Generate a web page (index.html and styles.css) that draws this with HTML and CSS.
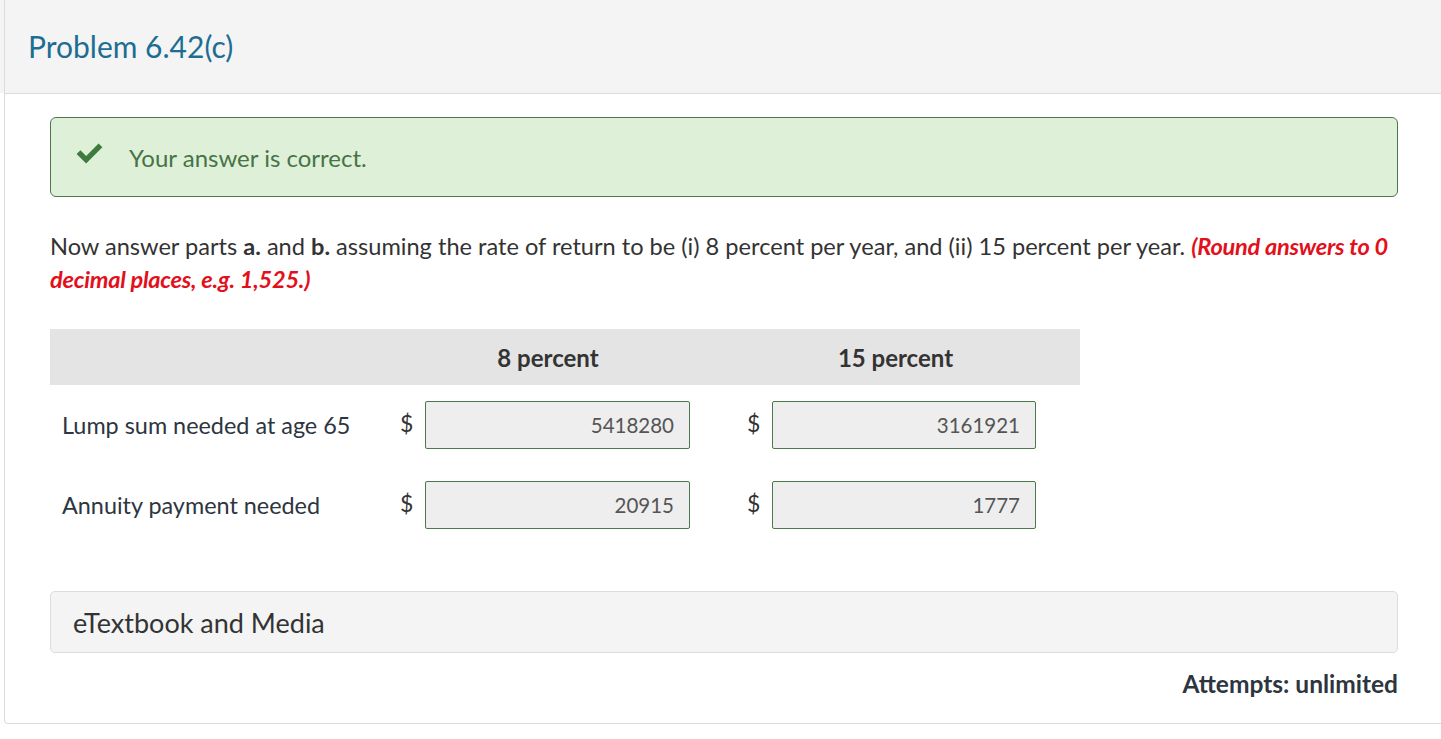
FILE: index.html
```html
<!DOCTYPE html>
<html>
<head>
<meta charset="utf-8">
<link rel="stylesheet" href="styles.css">
</head>
<body>
<div class="page">
  <div class="card">
    <header class="card-head">
      <h1 class="title">Problem 6.42(c)</h1>
    </header>
    <div class="card-body">
      <div class="alert">
        <svg class="check" viewBox="0 0 30 22" width="29" height="21" aria-hidden="true">
          <path d="M1.5 11.5 L5.5 7.5 L11.5 13.5 L24.5 0.5 L28.5 4.5 L11.5 21.5 Z" fill="#3f7a3f"/>
        </svg>
        <span class="alert-text">Your answer is correct.</span>
      </div>
      <p class="question">Now answer parts <b>a.</b> and <b>b.</b> assuming the rate of return to be (i) 8 percent per year, and (ii) 15 percent per year. <em class="hint">(Round answers to 0 decimal places, e.g. 1,525.)</em></p>
      <div class="grid">
        <div class="th"></div>
        <div class="th">8 percent</div>
        <div class="th">15 percent</div>

        <div class="label">Lump sum needed at age 65</div>
        <div class="cell c2"><span class="cur">$</span><span class="field">5418280</span></div>
        <div class="cell c3"><span class="cur">$</span><span class="field">3161921</span></div>

        <div class="label">Annuity payment needed</div>
        <div class="cell c2"><span class="cur">$</span><span class="field">20915</span></div>
        <div class="cell c3"><span class="cur">$</span><span class="field">1777</span></div>
      </div>
      <div class="media">eTextbook and Media</div>
      <div class="attempts">Attempts: unlimited</div>
    </div>
  </div>
</div>
</body>
</html>
```
FILE: styles.css
```css
* { box-sizing: border-box; }
html, body { margin: 0; padding: 0; background: #fff; }
body {
  font-family: Lato, "Open Sans", Arial, sans-serif;
  color: #333;
  width: 1441px;
  height: 739px;
  overflow: hidden;
}
.page {
  background: linear-gradient(#f4f4f4 0, #f4f4f4 93px, #fff 93px);
  height: 739px;
}
.card {
  margin-left: 4px;
  border-left: 1px solid #dcdcdc;
  border-bottom: 1px solid #dcdcdc;
  border-bottom-left-radius: 4px;
  background: #fff;
}
.card-head {
  height: 94px;
  background: #f4f4f4;
  border-bottom: 1px solid #dcdcdc;
  padding-left: 23px;
  display: flex;
  align-items: center;
}
.title {
  margin: 0;
  font-weight: 400;
  font-size: 30px;
  color: #1d6d93;
  position: relative;
  top: -1px;
}
.card-body {
  padding: 23px 43px 24px 45px;
}
.alert {
  height: 80px;
  background: #dff0d8;
  border: 1px solid #4d774d;
  border-radius: 6px;
  display: flex;
  align-items: center;
  padding-left: 24px;
}
.check { display: block; margin-right: 25px; position: relative; top: -4px; }
.alert-text {
  font-size: 24px;
  color: #467446;
}
.question {
  margin: 33px 0 0 0;
  font-size: 23.6px;
  line-height: 33px;
  color: #333;
}
.question b { font-weight: 700; }
.hint {
  color: #e3101c;
  font-weight: 700;
  font-style: italic;
  letter-spacing: -0.25px;
}
.grid {
  margin-top: 33px;
  display: grid;
  grid-template-columns: 335px 326px 369px;
  grid-auto-rows: 80px;
  grid-template-rows: 56px;
  width: 1030px;
}
.th {
  background: #e4e4e4;
  font-weight: 700;
  font-size: 24px;
  display: flex;
  align-items: center;
  justify-content: center;
  color: #333;
}
.label {
  display: flex;
  align-items: center;
  padding-left: 12px;
  font-size: 23.4px;
  color: #2d3540;
}
.cell {
  display: flex;
  align-items: center;
}
.c2 { padding-left: 15px; }
.c3 { padding-left: 36px; }
.cur {
  font-size: 23px;
  width: 25px;
  color: #333;
  position: relative;
  top: -2px;
}
.field {
  width: 265px;
  height: 48px;
  background: #eeeeee;
  border: 1px solid #4d774d;
  border-radius: 2px;
  display: flex;
  align-items: center;
  justify-content: flex-end;
  padding-right: 15px;
  font-size: 20.5px;
  color: #555;
}
.c3 .field { width: 264px; }
.media {
  margin-top: 46px;
  height: 62px;
  background: #f4f4f4;
  border: 1px solid #dcdcdc;
  border-radius: 5px;
  display: flex;
  align-items: center;
  padding-left: 22px;
  font-size: 27px;
  color: #333;
}
.attempts {
  margin-top: 16px;
  text-align: right;
  font-weight: 700;
  font-size: 24.5px;
  line-height: 30px;
  color: #2d3540;
}
```
